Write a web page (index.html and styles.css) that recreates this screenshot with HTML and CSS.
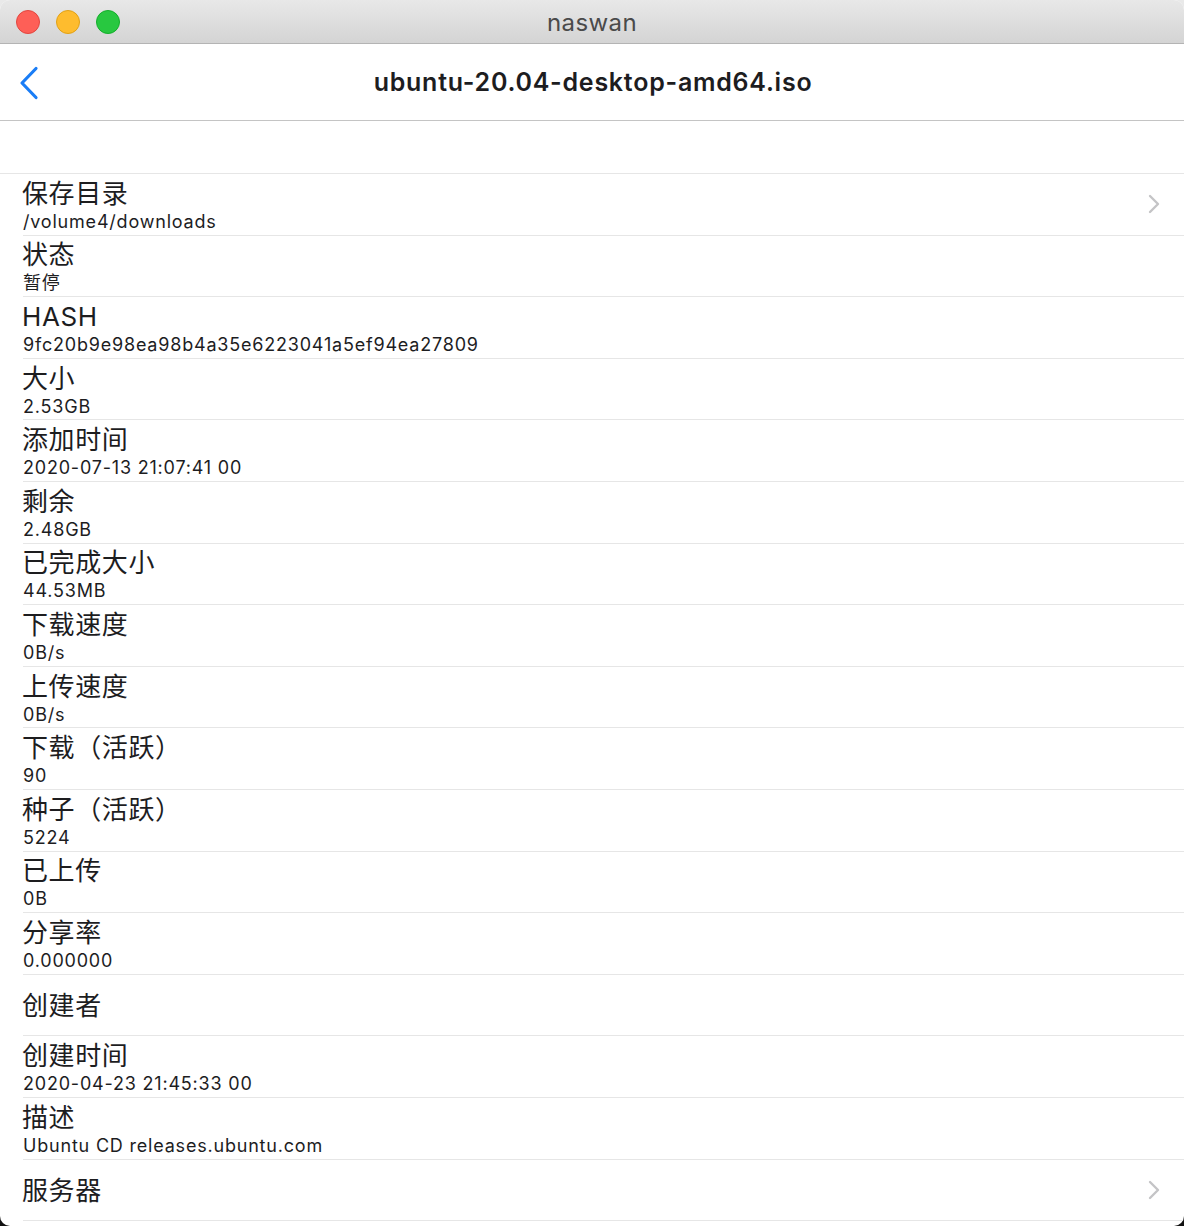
FILE: index.html
```html
<!DOCTYPE html>
<html lang="zh">
<head>
<meta charset="utf-8">
<title>naswan</title>
<link rel="stylesheet" href="styles.css">
</head>
<body>
<div class="window">
  <header class="titlebar">
    <div class="lights">
      <span class="light red"></span>
      <span class="light yellow"></span>
      <span class="light green"></span>
    </div>
    <div class="app-title">naswan</div>
  </header>
  <nav class="navbar">
    <a class="back" href="#" aria-label="back">
      <svg width="20" height="34" viewBox="0 0 20 34"><path d="M17 2.5 L3 17 L17 31.5" fill="none" stroke="#1a7df6" stroke-width="3.2" stroke-linecap="round" stroke-linejoin="round"/></svg>
    </a>
    <h1 class="nav-title">ubuntu-20.04-desktop-amd64.iso</h1>
  </nav>
  <div class="spacer"></div>
  <ul class="list">
    <li class="row link"><div class="txt"><div class="t">保存目录</div><div class="s">/volume4/downloads</div></div><svg class="chev" width="12" height="20" viewBox="0 0 12 20"><path d="M2 2 L10 10 L2 18" fill="none" stroke="#c4c4c6" stroke-width="2.4" stroke-linecap="round" stroke-linejoin="round"/></svg></li>
    <li class="row"><div class="txt"><div class="t">状态</div><div class="s">暂停</div></div></li>
    <li class="row"><div class="txt"><div class="t">HASH</div><div class="s">9fc20b9e98ea98b4a35e6223041a5ef94ea27809</div></div></li>
    <li class="row"><div class="txt"><div class="t">大小</div><div class="s">2.53GB</div></div></li>
    <li class="row"><div class="txt"><div class="t">添加时间</div><div class="s">2020-07-13 21:07:41 00</div></div></li>
    <li class="row"><div class="txt"><div class="t">剩余</div><div class="s">2.48GB</div></div></li>
    <li class="row"><div class="txt"><div class="t">已完成大小</div><div class="s">44.53MB</div></div></li>
    <li class="row"><div class="txt"><div class="t">下载速度</div><div class="s">0B/s</div></div></li>
    <li class="row"><div class="txt"><div class="t">上传速度</div><div class="s">0B/s</div></div></li>
    <li class="row"><div class="txt"><div class="t">下载（活跃）</div><div class="s">90</div></div></li>
    <li class="row"><div class="txt"><div class="t">种子（活跃）</div><div class="s">5224</div></div></li>
    <li class="row"><div class="txt"><div class="t">已上传</div><div class="s">0B</div></div></li>
    <li class="row"><div class="txt"><div class="t">分享率</div><div class="s">0.000000</div></div></li>
    <li class="row"><div class="txt"><div class="t">创建者</div></div></li>
    <li class="row"><div class="txt"><div class="t">创建时间</div><div class="s">2020-04-23 21:45:33 00</div></div></li>
    <li class="row"><div class="txt"><div class="t">描述</div><div class="s">Ubuntu CD releases.ubuntu.com</div></div></li>
    <li class="row link"><div class="txt"><div class="t">服务器</div></div><svg class="chev" width="12" height="20" viewBox="0 0 12 20"><path d="M2 2 L10 10 L2 18" fill="none" stroke="#c4c4c6" stroke-width="2.4" stroke-linecap="round" stroke-linejoin="round"/></svg></li>
  </ul>
</div>
</body>
</html>
```

FILE: styles.css
```css
* { box-sizing: border-box; }
html {
  height: 100%;
  background: linear-gradient(#e9e9e9 0, #e9e9e9 50%, #111 50%, #111 100%);
}
body {
  margin: 0;
  height: 100%;
  font-family: Inter, "Noto Sans CJK SC", sans-serif;
  color: #1d1d1f;
}
.window {
  height: 1226px;
  background: #fff;
  border-radius: 10px;
  overflow: hidden;
  display: flex;
  flex-direction: column;
}
.titlebar {
  height: 44px;
  flex: none;
  background: linear-gradient(#e8e8e8, #d4d4d4);
  border-bottom: 1px solid #b4b4b4;
  display: flex;
  align-items: center;
  position: relative;
}
.lights {
  display: flex;
  gap: 16px;
  padding-left: 16px;
}
.light {
  width: 24px;
  height: 24px;
  border-radius: 50%;
  display: block;
}
.red { background: #fe5f57; border: 1px solid #e2463f; }
.yellow { background: #febc2e; border: 1px solid #e1a116; }
.green { background: #28c840; border: 1px solid #14ae2b; }
.app-title {
  position: absolute;
  left: 0;
  right: 0;
  top: 0;
  bottom: 0;
  display: flex;
  align-items: center;
  justify-content: center;
  font-size: 24px;
  color: #4a4a4a;
  font-weight: 400;
  letter-spacing: 0.4px;
  padding-top: 1px;
}
.navbar {
  height: 77px;
  flex: none;
  border-bottom: 1px solid #c4c4c4;
  display: flex;
  align-items: center;
  position: relative;
}
.back {
  display: flex;
  padding-left: 19px;
  padding-top: 1px;
}
.nav-title {
  position: absolute;
  left: 0;
  right: 0;
  margin: 0;
  text-align: center;
  font-size: 25px;
  font-weight: 600;
  color: #1d1d1f;
  letter-spacing: 0.75px;
  padding-left: 2px;
}
.spacer {
  height: 53px;
  flex: none;
  border-bottom: 1px solid #e6e6e6;
}
.list {
  list-style: none;
  margin: 0;
  padding: 0;
}
.row {
  height: 61.6px;
  margin-left: 23px;
  border-bottom: 1px solid #e6e6e6;
  display: flex;
  align-items: center;
  justify-content: space-between;
  padding-right: 24px;
}
.txt {
  display: flex;
  flex-direction: column;
  padding-top: 2px;
}
.t {
  font-size: 26px;
  line-height: 30px;
  margin-left: -1px;
  letter-spacing: 0.6px;
}
.s {
  font-size: 18px;
  line-height: 21px;
  letter-spacing: 0.8px;
  margin-top: 2px;
}
.chev { flex: none; }
```
